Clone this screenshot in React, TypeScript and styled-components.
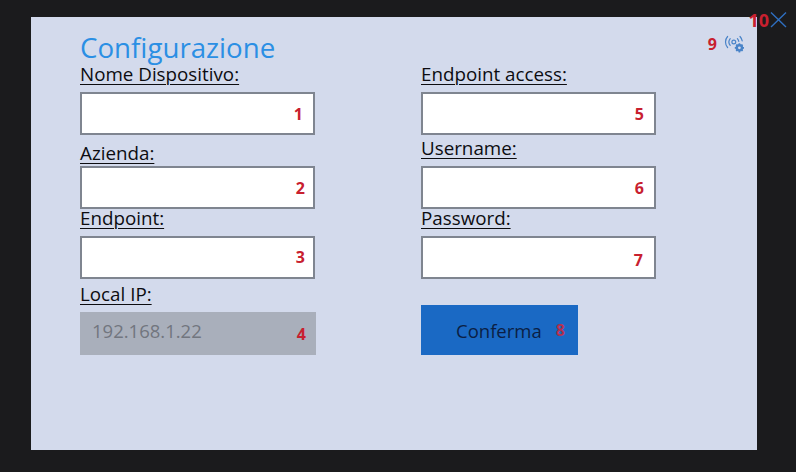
import React from 'react';
import styled, {createGlobalStyle} from 'styled-components';

const GlobalStyle = createGlobalStyle`
    html, body {
        margin: 0;
        padding: 0;
        background: #1b1b1d;
    }
    body {
        font-family: "Open Sans", "Noto Sans", sans-serif;
    }
`;

const Screen = styled.div`
    position: relative;
    width: 796px;
    height: 472px;
    box-sizing: border-box;
    padding: 17px 39px 22px 31px;
    background: #1b1b1d;
    overflow: hidden;
`;

const Panel = styled.div`
    position: relative;
    height: 433px;
    box-sizing: border-box;
    padding: 13px 0 0 49px;
    background: #d3daec;
`;

const Title = styled.h1`
    margin: 0;
    height: 34px;
    font-size: 27.7px;
    line-height: 34px;
    font-weight: 400;
    color: #2b8fe4;
`;

const Columns = styled.div`
    display: flex;
    gap: 105px;
`;

const Column = styled.div`
    display: flex;
    flex-direction: column;
    width: 236px;
`;

const Label = styled.label<{$top?: number; $gap?: number}>`
    display: block;
    height: 20px;
    margin-top: ${props => props.$top ?? 0}px;
    margin-bottom: ${props => props.$gap ?? 7}px;
    font-size: 18.8px;
    line-height: 19px;
    color: #0c0c10;
    text-decoration: underline;
    text-underline-offset: 3px;
    text-decoration-thickness: 1px;
`;

const Input = styled.div`
    position: relative;
    width: 235px;
    height: 43px;
    box-sizing: border-box;
    background: #ffffff;
    border: 2px solid #7f8590;
`;

const ReadOnlyInput = styled.div`
    position: relative;
    width: 236px;
    height: 43px;
    box-sizing: border-box;
    padding-left: 12px;
    background: #a9afbb;
    color: #72767f;
    font-size: 18.5px;
    line-height: 38px;
`;

const Badge = styled.span<{$right: number; $top: number}>`
    position: absolute;
    right: ${props => props.$right}px;
    top: ${props => props.$top}px;
    font-size: 16px;
    line-height: 20px;
    font-weight: 700;
    color: #c8202f;
`;

const ConfirmButton = styled.button`
    position: relative;
    width: 157px;
    height: 50px;
    margin-top: 26px;
    padding: 0 0 0 35px;
    border: none;
    background: #1a69c4;
    color: #0b1f45;
    font-family: inherit;
    font-size: 18.5px;
    line-height: 52px;
    text-align: left;
`;

const ButtonBadge = styled(Badge)`
    color: #b5304f;
`;

const NetworkStatus = styled.div`
    position: absolute;
    top: 17px;
    right: 11px;
    display: flex;
    align-items: center;
    gap: 7px;
`;

const StatusBadge = styled.span`
    font-size: 16px;
    line-height: 20px;
    font-weight: 700;
    color: #c8202f;
`;

const CloseArea = styled.div`
    position: absolute;
    top: 11px;
    right: 9px;
    display: flex;
    align-items: flex-start;
`;

const CloseBadge = styled.span`
    margin: -1px 1px 0 0;
    font-size: 18px;
    line-height: 20px;
    font-weight: 700;
    color: #c8202f;
`;

const NetworkIcon = () => (
    <svg width="22" height="18" viewBox="0 0 22 18" fill="none" stroke="#4a84c8" strokeWidth="1.2" strokeLinecap="round">
        <path d="M3.6 1.5C.8 4.6.8 9.4 3.6 12.5"/>
        <path d="M6.2 3.6C4.6 5.6 4.6 8.4 6.2 10.4"/>
        <circle cx="9.8" cy="7" r="1.9"/>
        <path d="M13.4 3.6C14.2 4.5 14.6 5.4 14.8 6.4"/>
        <path d="M16 1.5C17.2 2.8 17.9 4.2 18.2 5.8"/>
        <circle cx="15.4" cy="12.8" r="2.6" strokeWidth="2.4"/>
        <path d="M15.4 8.2V10M15.4 15.6V17.4M10.8 12.8H12.6M18.2 12.8H20M12.2 9.6L13.4 10.8M17.4 14.8L18.6 16M18.6 9.6L17.4 10.8M13.4 14.8L12.2 16" strokeWidth="1.7" strokeLinecap="butt"/>
    </svg>
);

const CloseIcon = () => (
    <svg width="17" height="17" viewBox="0 0 17 17" fill="none" stroke="#2f6fc0" strokeWidth="1.4">
        <path d="M1 1.5L16 16M16 1.5L1 16"/>
    </svg>
);

const App = () => {
    return (
        <Screen>
            <GlobalStyle/>
            <Panel>
                <Title>Configurazione</Title>
                <Columns>
                    <Column>
                        <Label $top={1}>Nome Dispositivo:</Label>
                        <Input><Badge $right={10} $top={10}>1</Badge></Input>
                        <Label $top={9} $gap={2}>Azienda:</Label>
                        <Input><Badge $right={8} $top={10}>2</Badge></Input>
                        <Label>Endpoint:</Label>
                        <Input><Badge $right={8} $top={9}>3</Badge></Input>
                        <Label $top={6}>Local IP:</Label>
                        <ReadOnlyInput>192.168.1.22<Badge $right={10} $top={12}>4</Badge></ReadOnlyInput>
                    </Column>
                    <Column>
                        <Label $top={1}>Endpoint access:</Label>
                        <Input><Badge $right={10} $top={10}>5</Badge></Input>
                        <Label $top={4}>Username:</Label>
                        <Input><Badge $right={10} $top={10}>6</Badge></Input>
                        <Label>Password:</Label>
                        <Input><Badge $right={11} $top={12}>7</Badge></Input>
                        <ConfirmButton>Conferma<ButtonBadge $right={13} $top={15}>8</ButtonBadge></ConfirmButton>
                    </Column>
                </Columns>
                <NetworkStatus>
                    <StatusBadge>9</StatusBadge>
                    <NetworkIcon/>
                </NetworkStatus>
            </Panel>
            <CloseArea>
                <CloseBadge>10</CloseBadge>
                <CloseIcon/>
            </CloseArea>
        </Screen>
    );
};

export default App;
